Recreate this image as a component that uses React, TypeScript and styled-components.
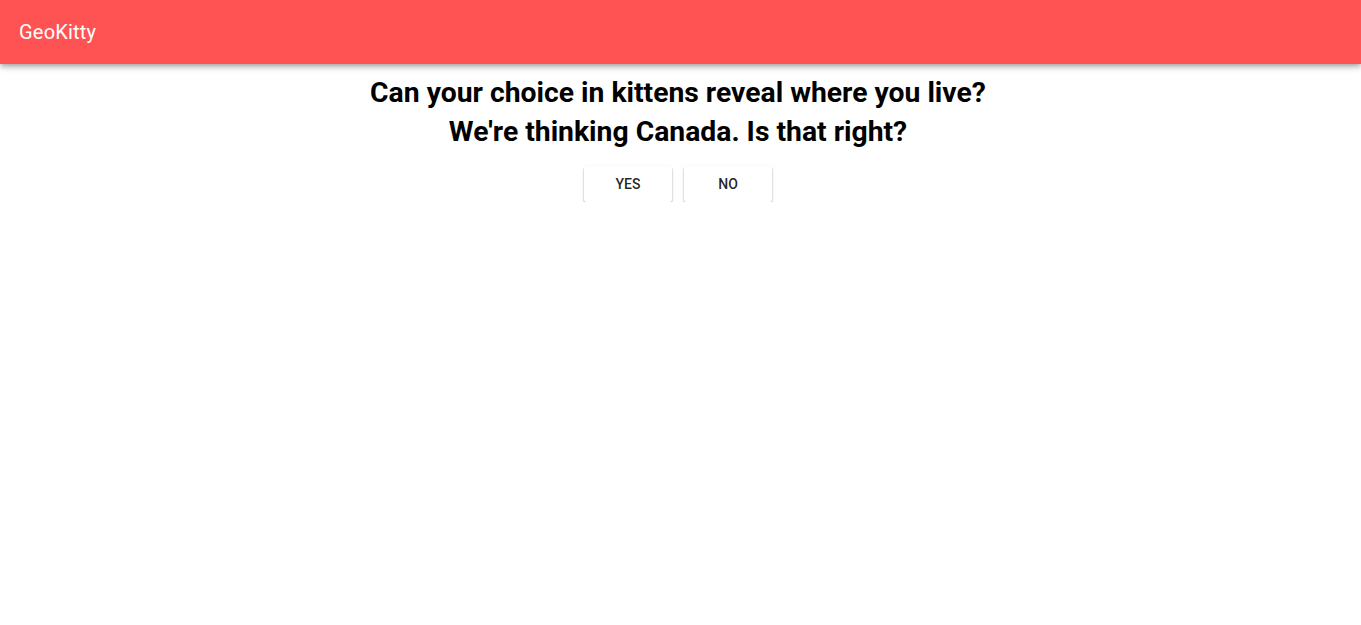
import styled, { createGlobalStyle } from "styled-components";

const GlobalStyle = createGlobalStyle`
    html, body {
        margin: 0;
        padding: 0;
        background: #ffffff;
        font-family: Roboto, "Liberation Sans", sans-serif;
    }
`;

const AppBar = styled.header`
    height: 64px;
    display: flex;
    align-items: center;
    padding: 0 19px;
    background-color: #ff5252;
    box-shadow: 0 2px 4px -1px rgba(0, 0, 0, 0.2), 0 4px 5px 0 rgba(0, 0, 0, 0.14), 0 1px 10px 0 rgba(0, 0, 0, 0.12);
    position: relative;
    z-index: 1;
`;

const Title = styled.div`
    color: #ffffff;
    font-size: 20px;
    font-weight: 400;
    letter-spacing: 0.01em;
`;

const Main = styled.main`
    display: flex;
    flex-direction: column;
    align-items: center;
    padding: 9px 5px 0 0;
`;

const Heading = styled.h2`
    margin: 0;
    font-size: 28.3px;
    line-height: 39px;
    font-weight: 700;
    color: #000000;
    text-align: center;
`;

const Actions = styled.div`
    display: flex;
    gap: 12px;
    margin-top: 15px;
`;

const Button = styled.button`
    min-width: 88px;
    height: 36px;
    padding: 0 16px;
    border: none;
    border-radius: 2px;
    background: #ffffff;
    color: rgba(0, 0, 0, 0.87);
    font-family: Roboto, "Liberation Sans", sans-serif;
    font-size: 14px;
    font-weight: 500;
    text-transform: uppercase;
    box-shadow: 0 2px 2px 0 rgba(0, 0, 0, 0.28), 0 1px 3px 0 rgba(0, 0, 0, 0.12);
    cursor: pointer;
`;

export default function App() {
    return (
        <>
            <GlobalStyle />
            <AppBar>
                <Title>GeoKitty</Title>
            </AppBar>
            <Main>
                <Heading>Can your choice in kittens reveal where you live?</Heading>
                <Heading>We're thinking Canada. Is that right?</Heading>
                <Actions>
                    <Button type="button">Yes</Button>
                    <Button type="button">No</Button>
                </Actions>
            </Main>
        </>
    );
}
